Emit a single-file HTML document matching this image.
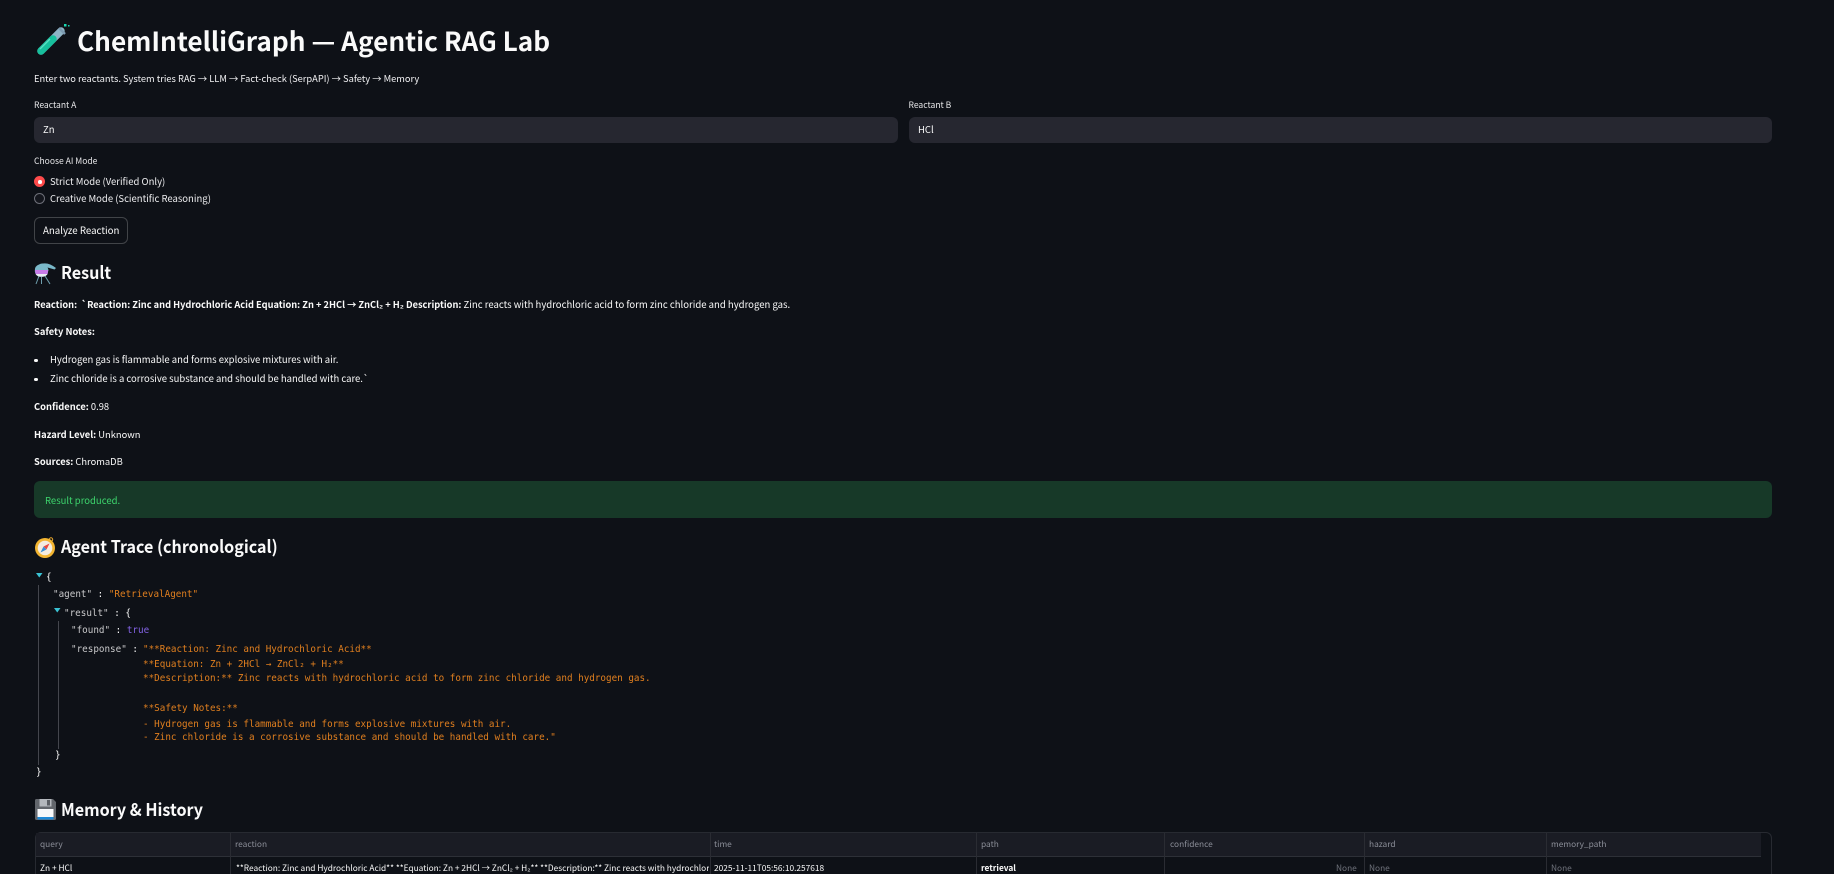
<!DOCTYPE html>
<html><head><meta charset="utf-8"><title>ChemIntelliGraph</title>
<style>
html,body{margin:0;padding:0;background:#0e1117;width:1834px;height:874px;overflow:hidden}
body{position:relative;font-family:"Noto Sans CJK JP","Liberation Sans",sans-serif;color:#fafafa;font-size:9.5px}
.t{position:absolute;white-space:nowrap;height:20px;line-height:20px}
.b{position:absolute;box-sizing:border-box}
b{font-weight:700}
.h{font-weight:700;font-size:17.2px;height:30px;line-height:30px;left:61px;transform:scaleX(.936);transform-origin:0 50%}
.l{font-size:8.55px;color:#e8e8ea}
.r{font-size:9.35px}
.m{position:absolute;white-space:pre;height:16px;line-height:16px;font-family:"DejaVu Sans Mono","Liberation Mono",monospace;font-size:9.27px;color:#c9c9cb}
.o{color:#e07f1f}.p{color:#8463e6}.w{color:#fafafa}
.th{color:#8c8f99;font-size:8.35px}
.td{font-size:8.33px}
svg{position:absolute;overflow:visible}
</style></head><body>

<!-- title -->
<svg style="left:34px;top:24px" width="34" height="34" viewBox="0 0 34 34">
<line x1="7" y1="27" x2="27" y2="7" stroke="#8fb4c6" stroke-width="7.5" stroke-linecap="round"/>
<line x1="7" y1="27" x2="19" y2="15" stroke="#17c09d" stroke-width="7.5" stroke-linecap="round"/>
<line x1="6" y1="25" x2="16" y2="15" stroke="#5ce0c4" stroke-width="1.3"/>
<line x1="25" y1="4" x2="31" y2="10" stroke="#7d9bb2" stroke-width="2.5"/>
<rect x="30" y="0" width="2.5" height="2.5" fill="#19d6b0"/><rect x="34" y="1" width="1.5" height="1.5" fill="#19d6b0"/>
</svg>
<div class="t" style="left:77px;top:21px;height:38px;line-height:38px;font-size:26.2px;font-weight:700">ChemIntelliGraph — Agentic RAG Lab</div>
<div class="t r" style="left:34px;top:68px;color:#f0f0f2;font-size:9.3px">Enter two reactants. System tries RAG → LLM → Fact-check (SerpAPI) → Safety → Memory</div>

<!-- inputs -->
<div class="t l" style="left:34px;top:95px">Reactant A</div>
<div class="b" style="left:34px;top:117px;width:864px;height:26px;background:#262730;border-radius:6px"></div>
<div class="t" style="left:43px;top:119px;">Zn</div>
<div class="t l" style="left:908.5px;top:95px">Reactant B</div>
<div class="b" style="left:908.5px;top:117px;width:863.5px;height:26px;background:#262730;border-radius:6px"></div>
<div class="t" style="left:918px;top:119px;">HCl</div>

<div class="t l" style="left:34px;top:151px">Choose AI Mode</div>
<div class="b" style="left:34px;top:176px;width:11px;height:11px;border-radius:50%;background:#ff4b4b"></div>
<div class="b" style="left:38px;top:180px;width:3.5px;height:3.5px;border-radius:50%;background:#fff"></div>
<div class="t" style="left:50px;top:171px;color:#eeeef0">Strict Mode (Verified Only)</div>
<div class="b" style="left:34px;top:193px;width:11px;height:11px;border-radius:50%;border:1px solid #6d6f78;background:#14161d"></div>
<div class="t" style="left:50px;top:188px;color:#eeeef0">Creative Mode (Scientific Reasoning)</div>

<div class="b" style="left:34px;top:217px;width:94px;height:27px;border:1px solid rgba(250,250,250,.22);border-radius:6px"></div>
<div class="t" style="left:43px;top:220px;font-size:9.7px">Analyze Reaction</div>

<!-- result -->
<svg style="left:34px;top:262px" width="24" height="24" viewBox="0 0 24 24">
<path d="M5 14 L2 22 M7.5 15V22 M11 14 L16 22" stroke="#6f9fae" stroke-width="1" fill="none"/>
<path d="M9 1.5 Q15 0.5 22 6 L20.5 7.5 L13.5 5.5 Q15 8 14.2 9 Q13.5 14.8 7.5 14.8 Q1.5 14.8 0.8 9 Q0.5 4 5 2.5 Q7 1.2 9 1.5Z" fill="#7ab8c9"/>
<path d="M1 8 H14.2 L13.6 12 H1.6Z" fill="#c77be8"/>
<path d="M1.6 12 H13.6 Q12 14.8 7.5 14.8 Q3 14.8 1.6 12Z" fill="#e8eef2"/>
</svg>
<div class="t h" style="top:257px">Result</div>

<div class="t" style="left:34px;top:294px;font-size:9.55px"><b style="font-size:9.25px">Reaction:&nbsp; `Reaction: Zinc and Hydrochloric Acid Equation: Zn + 2HCl → ZnCl₂ + H₂ Description:</b> Zinc reacts with hydrochloric acid to form zinc chloride and hydrogen gas.</div>
<div class="t r" style="left:34px;top:321px"><b>Safety Notes:</b></div>
<div class="b" style="left:34px;top:358.5px;width:3.5px;height:3.5px;border-radius:50%;background:#fafafa"></div>
<div class="t" style="left:50px;top:349px">Hydrogen gas is flammable and forms explosive mixtures with air.</div>
<div class="b" style="left:34px;top:377.5px;width:3.5px;height:3.5px;border-radius:50%;background:#fafafa"></div>
<div class="t" style="left:50px;top:368px">Zinc chloride is a corrosive substance and should be handled with care.`</div>
<div class="t r" style="left:34px;top:396px"><b>Confidence:</b> 0.98</div>
<div class="t r" style="left:34px;top:424px"><b>Hazard Level:</b> Unknown</div>
<div class="t r" style="left:34px;top:451px"><b>Sources:</b> ChromaDB</div>

<div class="b" style="left:34px;top:481px;width:1738px;height:37px;background:#173928;border-radius:6px"></div>
<div class="t" style="left:45px;top:490px;color:#3dd56d">Result produced.</div>

<!-- trace -->
<svg style="left:34px;top:537px" width="22" height="22" viewBox="0 0 22 22">
<circle cx="17" cy="2.5" r="1.7" fill="none" stroke="#e9a72c" stroke-width="1"/>
<circle cx="11" cy="11" r="10" fill="#f3b531"/>
<circle cx="11" cy="11" r="7.3" fill="#f4ece0"/>
<path d="M15.5 6.5 L9.5 9.5 L12.5 12.5Z" fill="#e8483f"/>
<path d="M6.5 15.5 L9.5 9.5 L12.5 12.5Z" fill="#3a8fd6"/>
</svg>
<div class="t h" style="top:531px">Agent Trace (chronological)</div>

<svg style="left:36px;top:573px" width="8" height="5"><path d="M0 0H6.5L3.25 4.5Z" fill="#3ac3d4"/></svg>
<svg style="left:54px;top:608px" width="8" height="5"><path d="M0 0H6.5L3.25 4.5Z" fill="#3ac3d4"/></svg>
<div class="b" style="left:38px;top:585px;width:1px;height:180px;background:#44464d"></div>
<div class="b" style="left:57.5px;top:621px;width:1px;height:128px;background:#44464d"></div>

<div class="m w" style="left:46px;top:570px">{</div>
<div class="m" style="left:53px;top:587px">"agent" <span class="w">:</span> <span class="o">"RetrievalAgent"</span></div>
<div class="m" style="left:64px;top:606px">"result" <span class="w">:</span> <span class="w">{</span></div>
<div class="m" style="left:71px;top:623px">"found" <span class="w">:</span> <span class="p">true</span></div>
<div class="m" style="left:71px;top:642px">"response" <span class="w">:</span></div>
<div class="m o" style="left:143px;top:642px">"**Reaction: Zinc and Hydrochloric Acid**</div>
<div class="m o" style="left:143px;top:657px">**Equation: Zn + 2HCl → ZnCl₂ + H₂**</div>
<div class="m o" style="left:143px;top:671px">**Description:** Zinc reacts with hydrochloric acid to form zinc chloride and hydrogen gas.</div>
<div class="m o" style="left:143px;top:701px">**Safety Notes:**</div>
<div class="m o" style="left:143px;top:717px">- Hydrogen gas is flammable and forms explosive mixtures with air.</div>
<div class="m o" style="left:143px;top:730px">- Zinc chloride is a corrosive substance and should be handled with care."</div>
<div class="m w" style="left:55px;top:748px">}</div>
<div class="m w" style="left:36px;top:765px">}</div>

<!-- memory -->
<svg style="left:35px;top:799px" width="21" height="21" viewBox="0 0 21 21">
<path d="M0 1.5 Q0 0 1.5 0 H18 L21 3 V19.5 Q21 21 19.5 21 H1.5 Q0 21 0 19.5Z" fill="#62666c"/>
<rect x="4.5" y="0" width="12" height="7.5" fill="#b3b7bc"/><rect x="12" y="1" width="3" height="5.5" fill="#5a5e64"/>
<rect x="2.5" y="10" width="16" height="8.5" fill="#f7f8fa"/><rect x="2.5" y="18" width="16" height="2.5" fill="#1e88d6"/>
</svg>
<div class="t h" style="top:794px">Memory &amp; History</div>

<div class="b" style="left:34.5px;top:832px;width:1737px;height:60px;border:1px solid #272a31;border-radius:6px"></div>
<div class="b" style="left:35.5px;top:833px;width:1725px;height:24px;background:#1a1c24;border-bottom:1px solid #2d3037"></div>
<div class="b" style="left:230px;top:833px;width:1px;height:41px;background:#2a2c33"></div>
<div class="b" style="left:710px;top:833px;width:1px;height:41px;background:#2a2c33"></div>
<div class="b" style="left:976px;top:833px;width:1px;height:41px;background:#2a2c33"></div>
<div class="b" style="left:1164px;top:833px;width:1px;height:41px;background:#2a2c33"></div>
<div class="b" style="left:1364px;top:833px;width:1px;height:41px;background:#2a2c33"></div>
<div class="b" style="left:1546px;top:833px;width:1px;height:41px;background:#2a2c33"></div>

<div class="t th" style="left:40px;top:834px">query</div>
<div class="t th" style="left:235px;top:834px">reaction</div>
<div class="t th" style="left:714px;top:834px">time</div>
<div class="t th" style="left:981px;top:834px">path</div>
<div class="t th" style="left:1170px;top:834px">confidence</div>
<div class="t th" style="left:1369px;top:834px">hazard</div>
<div class="t th" style="left:1551px;top:834px">memory_path</div>

<div class="t td" style="left:40px;top:858px">Zn + HCl</div>
<div class="t td" style="left:236px;top:858px;width:473px;overflow:hidden">**Reaction: Zinc and Hydrochloric Acid** **Equation: Zn + 2HCl → ZnCl₂ + H₂** **Description:** Zinc reacts with hydrochloric acid to form zinc chloride</div>
<div class="t td" style="left:714px;top:858px">2025-11-11T05:56:10.257618</div>
<div class="t td" style="left:981px;top:858px;font-weight:700">retrieval</div>
<div class="t td" style="left:1336px;top:858px;color:#70737c">None</div>
<div class="t td" style="left:1369px;top:858px;color:#70737c">None</div>
<div class="t td" style="left:1551px;top:858px;color:#70737c">None</div>

</body></html>
